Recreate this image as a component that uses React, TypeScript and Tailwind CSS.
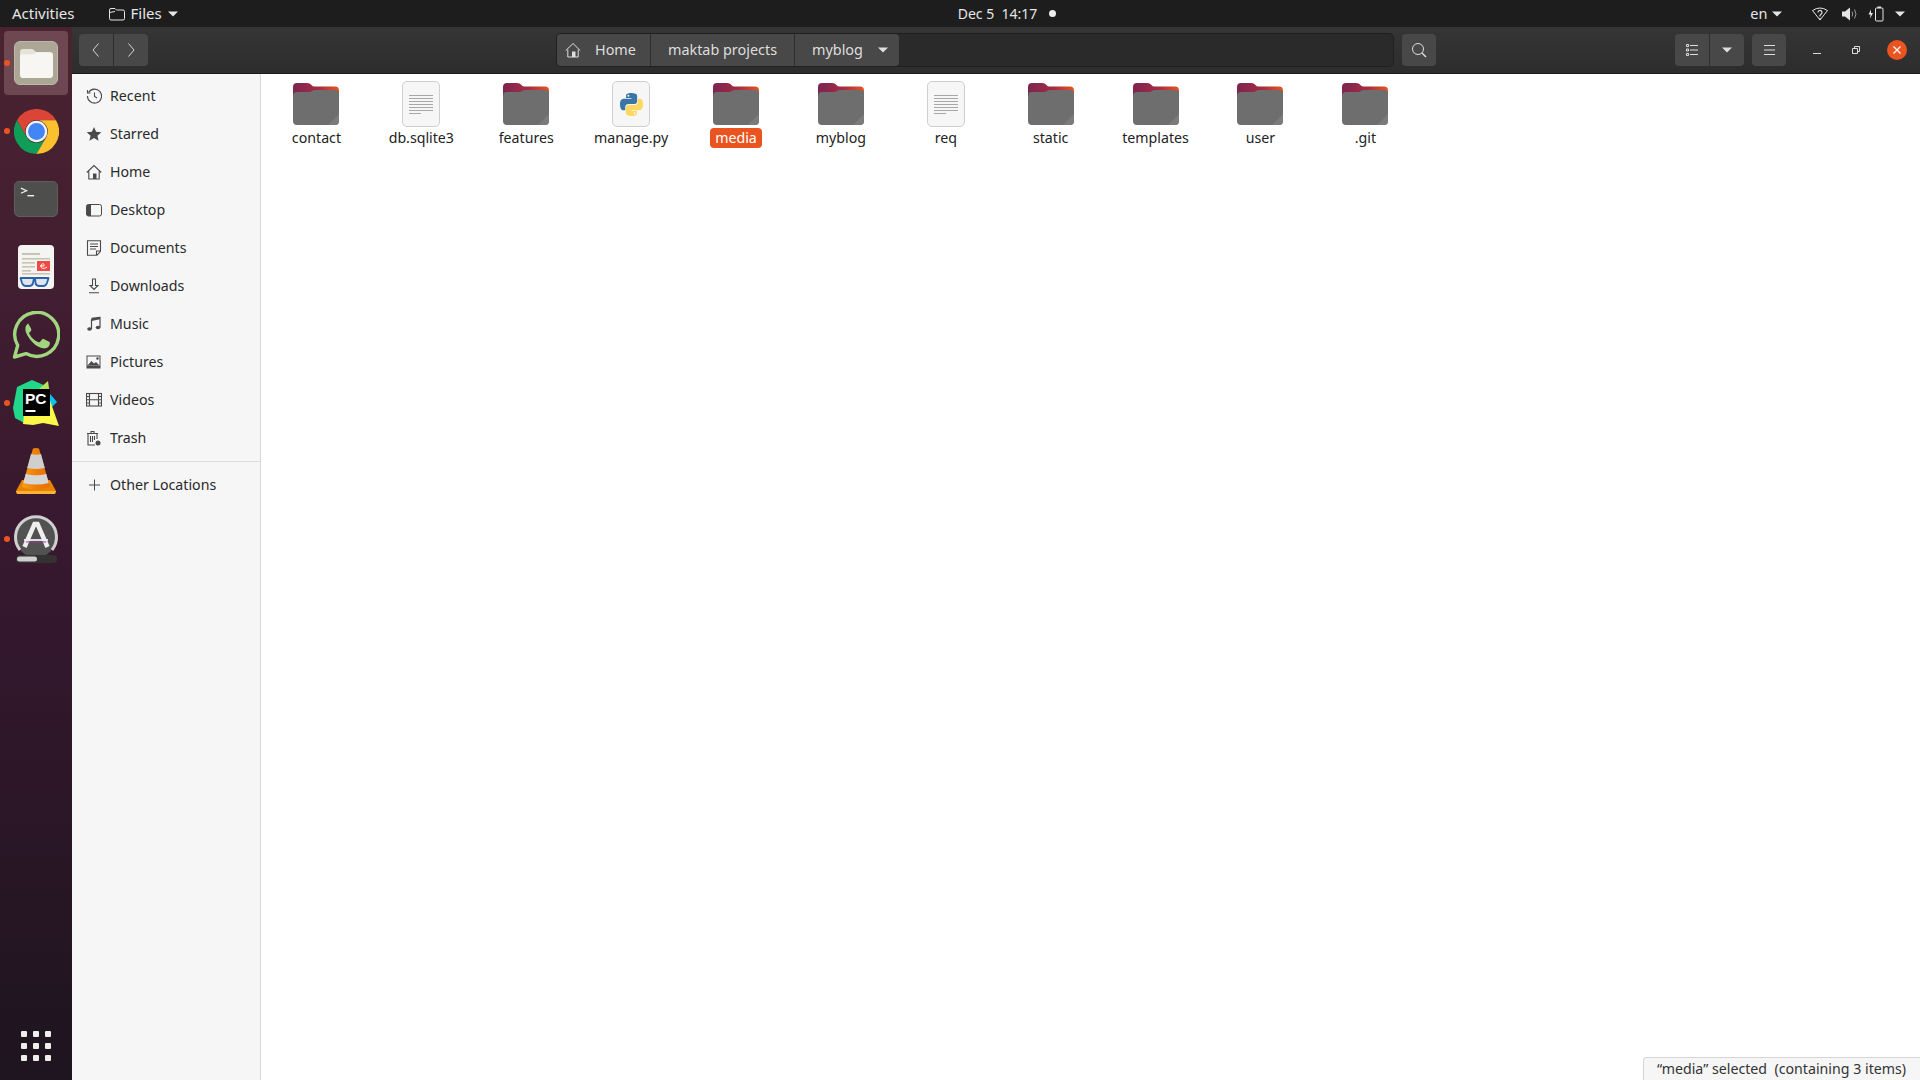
import React from 'react';

const FONT = '"Noto Sans", "Open Sans", sans-serif';

const Caret = ({ className = '' }: { className?: string }) => (
  <svg viewBox="0 0 10 6" className={`w-[10px] h-[6px] ${className}`}>
    <path d="M0 0.5h10L5 5.5z" fill="currentColor" />
  </svg>
);

/* ---------- dock icons ---------- */
const FilesIcon = () => (
  <div className="w-[44px] h-[44px] rounded-[6px] bg-[#aba695] border border-[#bdb8a8] flex items-center justify-center">
    <svg viewBox="0 0 32 28" className="w-[33px] h-[29px]">
      <path d="M0 3a3 3 0 0 1 3-3h9l4 3h13a3 3 0 0 1 3 3v19a3 3 0 0 1-3 3H3a3 3 0 0 1-3-3z" fill="#e6e3d8" />
      <path d="M0 8a3 3 0 0 1 3-3h10l3-2h13a3 3 0 0 1 3 3v19a3 3 0 0 1-3 3H3a3 3 0 0 1-3-3z" fill="#f7f6f2" />
    </svg>
  </div>
);

const ChromeIcon = () => (
  <svg viewBox="0 0 48 48" className="w-[45px] h-[45px]">
    <path d="M44.8 12H24a12 12 0 0 0-10.4 18L3.2 12a24 24 0 0 1 41.6 0z" fill="#db4437" />
    <path d="M3.2 12l10.4 18a12 12 0 0 0 20.8 0L24 48A24 24 0 0 1 3.2 12z" fill="#0f9d58" />
    <path d="M24 48l10.4-18A12 12 0 0 0 24 12h20.8A24 24 0 0 1 24 48z" fill="#fbc02d" />
    <circle cx="24" cy="24" r="11.5" fill="#f1f1f1" />
    <circle cx="24" cy="24" r="9" fill="#4285f4" />
  </svg>
);

const TerminalIcon = () => (
  <div className="w-[44px] h-[36px] rounded-[5px] bg-[#4e4e4c] border border-[#5f5f5d]">
    <svg viewBox="0 0 44 36" className="w-full h-full">
      <path d="M6 6.5l6 2.7-6 2.7" fill="none" stroke="#f2f2f2" strokeWidth="1.3" />
      <path d="M13 14.5h7" stroke="#f2f2f2" strokeWidth="1.5" />
    </svg>
  </div>
);

const ReaderIcon = () => (
  <svg viewBox="0 0 36 44" className="w-[36px] h-[44px]">
    <rect width="36" height="44" rx="4" fill="#f4f4f2" />
    <g fill="#c8c4b4">
      <rect x="4" y="8" width="18" height="2" />
      <rect x="4" y="13" width="28" height="1.6" />
      <rect x="4" y="17" width="13" height="1.6" />
      <rect x="4" y="21" width="13" height="1.6" />
      <rect x="4" y="25" width="9" height="1.6" />
      <rect x="4" y="28" width="28" height="1.6" />
    </g>
    <rect x="19" y="16" width="13" height="10" fill="#ee4b43" />
    <path d="M22 21h4c1-3-3-3-3 0s3 3 6 1" fill="none" stroke="#fff" strokeWidth="1" />
    <path d="M2.500 33h13.500l-1 5q-.5 3-4 3H8q-3 0-4-3zM17 33h13.500l-1.500 5q-1 3-4 3h-3.500q-3.500 0-4-3z" fill="#dfe5ea" stroke="#2a62ad" strokeWidth="1.800" strokeLinejoin="round" />
  </svg>
);

const WhatsappIcon = () => (
  <svg viewBox="0 0 48 48" className="w-[48px] h-[48px]">
    <path d="M2.5 46l3.2-11.6A22 22 0 1 1 14 42.6z" fill="none" stroke="#a0d67f" strokeWidth="3.4" strokeLinejoin="round" />
    <path d="M17 12.5c-1.2 0-3.6 1.6-3.6 5.6 0 4 3 8 4 9.300 1 1.300 5.700 8.300 13.400 9.900 3.800.8 6.700-1.700 7-4.300.1-1 .1-1.700-.2-2-.4-.5-5.400-3-6-3.100-.7-.2-1.100 0-1.600.6-.5.700-1.600 2.100-2.100 2.500-.5.400-1 .4-1.900 0-.9-.4-3.200-1.400-5.500-3.800-1.700-1.700-2.900-3.900-3.200-4.500-.3-.6 0-1.100.4-1.500.5-.5 1.200-1.300 1.500-1.800.3-.6.2-1-.1-1.700-.3-.6-2.300-4.600-2.900-4.700z" fill="#a0d67f" />
  </svg>
);

const PyCharmIcon = () => (
  <svg viewBox="0 0 46 46" className="w-[46px] h-[46px]">
    <path d="M0 28L4 7 19 0l14 6v24L13 44 2 38z" fill="#21d789" />
    <path d="M26 9l9-8 2 14-11 2z" fill="#b8e356" />
    <path d="M32 8l12 14-8 8z" fill="#07c3f2" />
    <path d="M10 44l2-20 22-12 12 34-16-3-10 2z" fill="#fcf84a" />
    <rect x="10" y="9" width="27" height="27" fill="#000" />
    <text x="12" y="24" fontFamily='"Liberation Sans", sans-serif' fontWeight="700" fontSize="15.500" fill="#fff">PC</text>
    <rect x="12.500" y="30" width="10" height="2" fill="#fff" />
  </svg>
);

const VlcIcon = () => (
  <svg viewBox="0 0 42 48" className="w-[42px] h-[48px]">
    <defs>
      <linearGradient id="cone" x1="0" x2="1" y1="0" y2="0">
        <stop offset="0" stopColor="#f7a11a" />
        <stop offset=".5" stopColor="#ee7d05" />
        <stop offset="1" stopColor="#e96f00" />
      </linearGradient>
    </defs>
    <path d="M7 33L1 44l1 3h38l1-3-6-11z" fill="#e98305" />
    <path d="M1 44h40l-1 3H2z" fill="#f9b233" />
    <path d="M18 1.500q3-1 6 0L35 40q-14 5-28 0z" fill="url(#cone)" />
    <path d="M16 7q5 1.500 10 0l3.800 14q-8.800 2-17.600 0z" fill="#cfcfcf" />
    <path d="M10.800 27q10.200 2.500 20.400 0l2.500 9q-12.700 3-25.400 0z" fill="#d6d6d6" />
  </svg>
);

const SoftwareIcon = () => (
  <svg viewBox="0 0 46 54" className="w-[46px] h-[54px]">
    <circle cx="23" cy="25" r="20.500" fill="#525252" />
    <path d="M7 38A20.500 20.500 0 1 1 39 38" fill="none" stroke="#cfcfcf" strokeWidth="3" />
    <path d="M11.500 35L21.500 12h3L34.500 35" fill="none" stroke="#efefef" strokeWidth="4.500" />
    <path d="M11 28h24" stroke="#efefef" strokeWidth="1.800" />
    <path d="M13 30h20" stroke="#8f3f8c" strokeWidth="1" />
    <rect x="3" y="43" width="41" height="8" rx="4" fill="#333" />
    <rect x="4" y="44.500" width="20" height="5" rx="2.500" fill="#d0d0d0" />
  </svg>
);

const DockItem = ({ running, active, children }: { running?: boolean; active?: boolean; children: React.ReactNode }) => (
  <div className={`relative w-[64px] h-[64px] mb-[4px] ml-[4px] rounded-[4px] flex items-center justify-center ${active ? 'bg-[#6d4852]' : ''}`}>
    {running && <span className="absolute left-[0px] top-[29px] w-[6px] h-[6px] rounded-full bg-[#e95420]" />}
    {children}
  </div>
);

const Dock = () => (
  <aside className="w-[72px] shrink-0 flex flex-col pt-[4px] bg-gradient-to-b from-[#4b2330] via-[#37182f] to-[#1e141f]">
    <DockItem running active><FilesIcon /></DockItem>
    <DockItem running><ChromeIcon /></DockItem>
    <DockItem><TerminalIcon /></DockItem>
    <DockItem><ReaderIcon /></DockItem>
    <DockItem><WhatsappIcon /></DockItem>
    <DockItem running><PyCharmIcon /></DockItem>
    <DockItem><VlcIcon /></DockItem>
    <DockItem running><SoftwareIcon /></DockItem>
    <div className="mt-auto mb-[19px] ml-[21px] grid grid-cols-3 gap-[6px] w-[30px]">
      {Array.from({ length: 9 }).map((_, i) => (
        <span key={i} className="w-[6px] h-[6px] rounded-[1px] bg-[#eeeeea]" />
      ))}
    </div>
  </aside>
);

/* ---------- sidebar ---------- */
const ICON = { fill: 'none', stroke: '#4a4a4a', strokeWidth: 1.1 };

const sideIcons: Record<string, React.ReactNode> = {
  Recent: (
    <g {...ICON}>
      <path d="M2.500 4.500A7 7 0 1 1 1.500 8" />
      <path d="M1.500 2v3h3M8.500 4.500V8.500l2.500 1.500" />
    </g>
  ),
  Starred: <path d="M8 1l2.100 4.800 5.200.5-3.900 3.400 1.200 5.100L8 12.100l-4.600 2.700 1.200-5.100L.7 6.300l5.200-.5z" fill="#4a4a4a" />,
  Home: (
    <g {...ICON}>
      <path d="M.8 8.500L8 1.500l7.200 7M2.800 7.500v7.500h10.400V7.500" />
      <rect x="7" y="9.500" width="3.500" height="5.500" fill="#4a4a4a" stroke="none" />
    </g>
  ),
  Desktop: (
    <g>
      <rect x=".5" y="2.500" width="15" height="11.500" rx="2" fill="none" stroke="#4a4a4a" />
      <path d="M2.500 2.500H5v11.500H2.500a2 2 0 0 1-2-2V4.500a2 2 0 0 1 2-2z" fill="#4a4a4a" />
    </g>
  ),
  Documents: (
    <g {...ICON}>
      <path d="M1.500.8h13v10.500l-3.500 3.900h-9.500z" />
      <path d="M4 4h8M4 6.500h8M4 9h6" />
      <path d="M10.500 15v-4h4" />
    </g>
  ),
  Downloads: (
    <g {...ICON}>
      <path d="M6.500 1h3v6.500H12L8 11.500 4 7.500h2.500zM3 14.800h10" />
    </g>
  ),
  Music: (
    <g>
      <path d="M5.500 3.500L14 1.500v10M5.500 3.500V13" fill="none" stroke="#4a4a4a" strokeWidth="1.200" />
      <path d="M5.500 1.800L14 .8v2.500L5.500 5z" fill="#4a4a4a" />
      <ellipse cx="3.500" cy="13" rx="2.300" ry="1.800" fill="#4a4a4a" />
      <ellipse cx="12" cy="11.500" rx="2.300" ry="1.800" fill="#4a4a4a" />
    </g>
  ),
  Pictures: (
    <g>
      <rect x=".5" y="1.500" width="14" height="13" fill="#4a4a4a" />
      <rect x="1.500" y="2.500" width="12" height="9" fill="#f6f6f6" />
      <path d="M1.500 11.500l4-4.500 2.500 2.500 2-1.500 3.500 3.500z" fill="#4a4a4a" />
      <circle cx="11.500" cy="4.500" r="1.200" fill="#4a4a4a" />
    </g>
  ),
  Videos: (
    <g {...ICON}>
      <rect x=".5" y="1.500" width="15" height="12.500" />
      <path d="M3.500 1.500V14M12.500 1.500V14M3.500 7.700h9M.5 4.500h3M.5 7.700h3M.5 11h3M12.500 4.500h3M12.500 7.700h3M12.500 11h3" />
    </g>
  ),
  Trash: (
    <g {...ICON}>
      <path d="M1 3.500h11M2 3.500V15h7M11 3.500V9M5 3.500V1.500h3v2M4.500 6v6M6.500 6v6M8.500 6v4" />
      <circle cx="12" cy="13" r="2.500" fill="#4a4a4a" stroke="none" />
    </g>
  ),
  'Other Locations': <path d="M8.500 2.500v11M3 8h11" stroke="#4a4a4a" strokeWidth="1" fill="none" />,
};

const SideRow = ({ label }: { label: string }) => (
  <div className="h-[38px] flex items-center pl-[14px] text-[14.2px] text-[#2a2a2a]">
    <svg viewBox="0 0 16 16" className="w-[16px] h-[16px] mr-[8px] shrink-0">{sideIcons[label]}</svg>
    <span>{label}</span>
  </div>
);

const Sidebar = () => (
  <nav className="w-[189px] shrink-0 bg-[#f6f6f6] border-r border-[#d8d8d8] pt-[3px]">
    {['Recent', 'Starred', 'Home', 'Desktop', 'Documents', 'Downloads', 'Music', 'Pictures', 'Videos', 'Trash'].map((l) => (
      <SideRow key={l} label={l} />
    ))}
    <div className="border-t border-[#dcdcdc] mt-[4px] pt-[4px]">
      <SideRow label="Other Locations" />
    </div>
  </nav>
);

/* ---------- files ---------- */
const FolderIcon = () => (
  <svg viewBox="0 0 46 42" className="w-[46px] h-[42px]">
    <defs>
      <linearGradient id="tab" x1="0" x2="1" y1="0" y2="0">
        <stop offset="0" stopColor="#7d2351" />
        <stop offset=".55" stopColor="#a42c42" />
        <stop offset="1" stopColor="#e95420" />
      </linearGradient>
    </defs>
    <path d="M0 4a4 4 0 0 1 4-4h10q3 0 4.500 2 1 1.500 3 1.500H42a4 4 0 0 1 4 4v10H0z" fill="url(#tab)" />
    <path d="M0 13a4 4 0 0 1 4-4h12q2 0 3-1 1-1 3-1h20a4 4 0 0 1 4 4v27a4 4 0 0 1-4 4H4a4 4 0 0 1-4-4z" fill="#6e6e6e" />
    <path d="M46 31v7a4 4 0 0 1-4 4h-7z" fill="#7b7b7b" />
  </svg>
);

const TextFileIcon = () => (
  <div className="w-[38px] h-[46px] rounded-[5px] bg-[#f6f6f6] border border-[#cfcfcf] flex flex-col justify-center gap-[2px] pl-[6px]">
    {[24, 24, 24, 24, 24, 24, 12].map((w, i) => (
      <span key={i} style={{ width: w }} className="h-px bg-[#a8a8a8]" />
    ))}
  </div>
);

const PythonFileIcon = () => (
  <div className="w-[38px] h-[46px] rounded-[5px] bg-[#f6f6f6] border border-[#cfcfcf] flex items-center justify-center">
    <svg viewBox="0 0 24 24" className="w-[23px] h-[23px]">
      <path d="M11.900 0C6 0 6.300 2.600 6.300 2.600v2.700h5.700v.8H4S0 5.600 0 11.900s3.500 6 3.500 6h2v-2.900s-.1-3.500 3.400-3.500h5.700s3.300.1 3.300-3.200V3.100S18.400 0 11.900 0zM8.700 1.800a1 1 0 1 1 0 2.100 1 1 0 0 1 0-2.100z" fill="#3a75a8" />
      <path d="M12.100 24c5.900 0 5.600-2.600 5.600-2.600v-2.700H12v-.8h8s4 .5 4-5.800-3.500-6-3.500-6h-2V9s.1 3.500-3.400 3.500H9.400s-3.300-.1-3.300 3.200v5.200S5.600 24 12.100 24zm3.200-1.800a1 1 0 1 1 0-2.100 1 1 0 0 1 0 2.100z" fill="#fdd75f" />
    </svg>
  </div>
);

type FileItem = { name: string; kind: 'folder' | 'text' | 'python'; selected?: boolean };

const items: FileItem[] = [
  { name: 'contact', kind: 'folder' },
  { name: 'db.sqlite3', kind: 'text' },
  { name: 'features', kind: 'folder' },
  { name: 'manage.py', kind: 'python' },
  { name: 'media', kind: 'folder', selected: true },
  { name: 'myblog', kind: 'folder' },
  { name: 'req', kind: 'text' },
  { name: 'static', kind: 'folder' },
  { name: 'templates', kind: 'folder' },
  { name: 'user', kind: 'folder' },
  { name: '.git', kind: 'folder' },
];

const FileCell = ({ item }: { item: FileItem }) => (
  <div className="w-[104.9px] flex flex-col items-center">
    <div className="h-[46px] flex items-center justify-center mb-[1px]">
      {item.kind === 'folder' && <FolderIcon />}
      {item.kind === 'text' && <TextFileIcon />}
      {item.kind === 'python' && <PythonFileIcon />}
    </div>
    <span className={`h-[20px] leading-[19px] px-[5px] rounded-[4px] text-[14.2px] ${item.selected ? 'bg-[#e95420] text-white' : 'text-[#222]'}`}>
      {item.name}
    </span>
  </div>
);

/* ---------- chrome ---------- */
const TopBar = () => (
  <header className="h-[27px] bg-[#1d1d1d] text-[#e6e6e6] text-[15px] flex items-center">
    <span className="ml-[12px]">Activities</span>
    <svg viewBox="0 0 16 14" className="w-[16px] h-[14px] ml-[34px]">
      <path d="M.5 3a1.500 1.500 0 0 1 1.500-1.500h4l1.500 1.500h6.500A1.500 1.500 0 0 1 15.500 4.500v7a1.500 1.500 0 0 1-1.500 1.500H2A1.500 1.500 0 0 1 .5 11.500zM.5 5.500L6 4.500" fill="none" stroke="#e6e6e6" strokeWidth="1" />
    </svg>
    <span className="ml-[6px]">Files</span>
    <Caret className="ml-[6px]" />
    <span className="ml-[780px] whitespace-pre text-[14px]">Dec 5  14:17</span>
    <span className="ml-[12px] w-[7px] h-[7px] rounded-full bg-[#eeeeee]" />
    <span className="ml-[694px] text-[14.5px]">en</span>
    <Caret className="ml-[5px]" />
    <svg viewBox="0 0 16 14" className="w-[16px] h-[14px] ml-[30px]">
      <path d="M.5 3.500Q8-1.500 15.500 3.500L8 13z" fill="none" stroke="#e6e6e6" strokeWidth="1" />
      <path d="M6 5.500a2 2 0 1 1 3 1.700L8 8.500v1M8 11v1" fill="none" stroke="#e6e6e6" strokeWidth="1.200" />
    </svg>
    <svg viewBox="0 0 15 14" className="w-[15px] h-[14px] ml-[14px]">
      <path d="M0 4.500h3L8 .5v13l-5-4H0z" fill="#e6e6e6" />
      <path d="M10 4.500q1.500 2.500 0 5M12.500 2.500q3 4.500 0 9" fill="none" stroke="#9a9a9a" strokeWidth="1" />
    </svg>
    <svg viewBox="0 0 16 16" className="w-[16px] h-[16px] ml-[11px]">
      <path d="M3 3.500L.5 8.500h2L2 12.500l3-5.500H3z" fill="#e6e6e6" />
      <rect x="7.500" y="2" width="7.500" height="13" rx="1" fill="none" stroke="#e6e6e6" />
      <rect x="9.500" y=".5" width="3.500" height="1.500" fill="#e6e6e6" />
    </svg>
    <Caret className="ml-[11px]" />
  </header>
);

const BTN = 'bg-[#484848] flex items-center justify-center h-[32px] w-[34px]';

const PathSeg = ({ children, className = '' }: { children: React.ReactNode; className?: string }) => (
  <div className={`h-full flex items-center bg-[#484848] text-[#dedede] text-[14.4px] ${className}`}>{children}</div>
);

const HeaderBar = () => (
  <div className="h-[47px] bg-gradient-to-b from-[#353535] to-[#2d2d2d] border-b border-[#1a1a1a] flex items-center">
    <div className="ml-[7px] flex rounded-[4px] overflow-hidden">
      <div className={`${BTN} border-r border-[#2d2d2d] w-[35px]`}>
        <svg viewBox="0 0 8 14" className="w-[8px] h-[14px]"><path d="M6.500.5L1 7l5.500 6.500" fill="none" stroke="#d8d8d8" /></svg>
      </div>
      <div className={BTN}>
        <svg viewBox="0 0 8 14" className="w-[8px] h-[14px]"><path d="M1.500.5L7 7l-5.500 6.500" fill="none" stroke="#d8d8d8" /></svg>
      </div>
    </div>
    {/* path bar */}
    <div className="ml-[408px] w-[838px] h-[34px] rounded-[5px] bg-[#2a2a2a] border border-[#202020] flex">
      <PathSeg className="w-[94px] rounded-l-[4px] border-r border-[#2d2d2d] pl-[8px]">
        <svg viewBox="0 0 16 16" className="w-[16px] h-[16px] mr-[14px]">
          <path d="M.8 8.500L8 1.500l7.200 7M2.800 7.500v7.500h10.400V7.500" fill="none" stroke="#dedede" />
          <rect x="7" y="9.500" width="3.500" height="5.500" fill="#dedede" />
        </svg>
        Home
      </PathSeg>
      <PathSeg className="w-[144px] border-r border-[#2d2d2d] justify-center">maktab projects</PathSeg>
      <PathSeg className="w-[104px] rounded-r-[4px] pl-[17px] gap-[15px]">
        myblog
        <Caret />
      </PathSeg>
    </div>
    <div className={`${BTN} ml-[8px] rounded-[4px]`}>
      <svg viewBox="0 0 16 16" className="w-[16px] h-[16px]">
        <circle cx="7" cy="7" r="5.500" fill="none" stroke="#dedede" />
        <path d="M11 11l4 4" stroke="#dedede" strokeWidth="1.400" />
      </svg>
    </div>
    <div className="ml-[239px] flex rounded-[4px] overflow-hidden">
      <div className={`${BTN} border-r border-[#2d2d2d] w-[35px]`}>
        <svg viewBox="0 0 12 12" className="w-[12px] h-[12px]">
          <path d="M.5.500h2v2h-2zM.5 5h2v2h-2zM.5 9.500h2v2h-2z" fill="none" stroke="#dedede" />
          <path d="M4 1.500h8M4 6h8M4 10.500h8" stroke="#dedede" />
        </svg>
      </div>
      <div className={BTN}><Caret className="text-[#dedede]" /></div>
    </div>
    <div className={`${BTN} ml-[8px] rounded-[4px]`}>
      <svg viewBox="0 0 11 10" className="w-[11px] h-[10px]">
        <path d="M0 .5h11M0 5h11M0 9.500h11" stroke="#dedede" />
      </svg>
    </div>
    <span className="ml-[27px] w-[8px] h-px bg-[#dedede] translate-y-[3px]" />
    <svg viewBox="0 0 8 8" className="w-[8px] h-[8px] ml-[31px]">
      <path d="M.5 2.500h5v5h-5zM2.500 2.500V.5h5v5h-2" fill="none" stroke="#dedede" />
    </svg>
    <div className="ml-[27px] w-[20px] h-[20px] rounded-full bg-[#e95420] flex items-center justify-center">
      <svg viewBox="0 0 8 8" className="w-[8px] h-[8px]">
        <path d="M.5.500l7 7M7.500.500l-7 7" stroke="#fff" strokeWidth="1.200" />
      </svg>
    </div>
  </div>
);

const App: React.FC = () => {
  return (
    <div className="w-[1920px] h-[1080px] flex flex-col overflow-hidden bg-white" style={{ fontFamily: FONT }}>
      <TopBar />
      <div className="flex-1 flex min-h-0">
        <Dock />
        <div className="flex-1 flex flex-col min-w-0">
          <HeaderBar />
          <div className="flex-1 flex min-h-0">
            <Sidebar />
            <main className="relative flex-1 bg-white pl-[3px] pt-[7px]">
              <div className="flex">
                {items.map((item) => (
                  <FileCell key={item.name} item={item} />
                ))}
              </div>
              <div className="absolute right-0 bottom-0 w-[277px] h-[23px] bg-[#f6f6f6] border-t border-l border-[#d5d5d5] rounded-tl-[4px] flex items-center pl-[13px] text-[14.2px] text-[#333] whitespace-pre">
                “media” selected  (containing 3 items)
              </div>
            </main>
          </div>
        </div>
      </div>
    </div>
  );
};

export default App;
